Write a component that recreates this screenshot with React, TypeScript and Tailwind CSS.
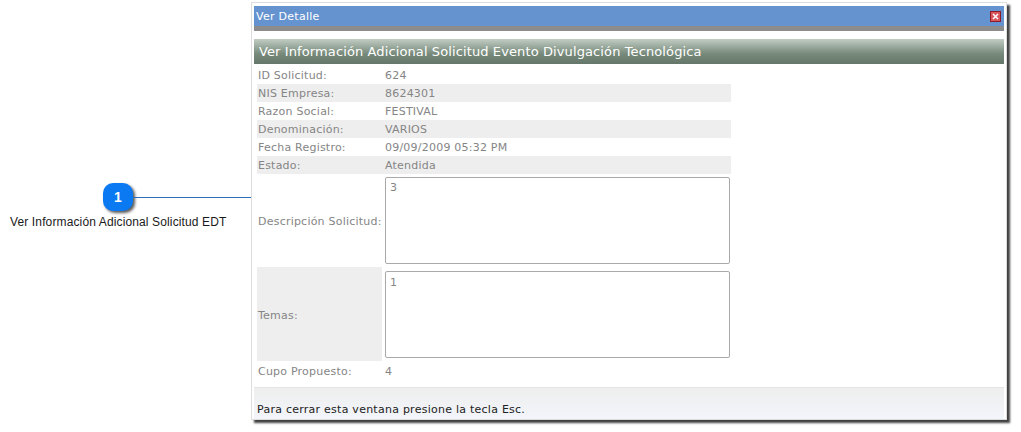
import React from 'react';

const rows = [
  { label: 'ID Solicitud:', value: '624' },
  { label: 'NIS Empresa:', value: '8624301' },
  { label: 'Razon Social:', value: 'FESTIVAL' },
  { label: 'Denominación:', value: 'VARIOS' },
  { label: 'Fecha Registro:', value: '09/09/2009 05:32 PM' },
  { label: 'Estado:', value: 'Atendida' },
];

const dejavu = "font-['DejaVu_Sans',sans-serif]";

const InfoRow = ({ label, value, shaded }: { label: string; value: string; shaded: boolean }) => (
  <div className={`flex h-[18px] items-center pt-[2px] ${shaded ? 'bg-[#eeeeee]' : ''}`}>
    <div className="w-[128px] pl-[1px]">{label}</div>
    <div>{value}</div>
  </div>
);

const App: React.FC = () => {
  return (
    <div className="flex h-[432px] w-[1021px] overflow-hidden bg-white">
      {/* Callout */}
      <div className="w-[251px] flex-shrink-0 pt-[183px]">
        <div className="flex items-center pl-[103px]">
          <div className="flex h-[28px] w-[30px] flex-shrink-0 items-center justify-center rounded-[10px] bg-[#0b79f2] font-['Liberation_Sans',sans-serif] text-[14px] font-bold text-white shadow-[2px_2px_3px_rgba(0,0,0,0.65)]">
            1
          </div>
          <div className="h-px flex-grow bg-[#2c6fb8]" />
        </div>
        <p className="mt-[4px] pl-[10px] font-['Liberation_Sans',sans-serif] text-[12px] leading-[14px] tracking-[0.13px] text-[#1a1a1a]">
          Ver Información Adicional Solicitud EDT
        </p>
      </div>

      {/* Ventana */}
      <div className={`mt-[2px] flex h-[418px] w-[756px] flex-shrink-0 flex-col border border-[#dddddd] bg-white px-[2px] pt-[3px] text-[11px] tracking-[0.22px] shadow-[3px_3px_2px_rgba(0,0,0,0.75)] ${dejavu}`}>
        <div className="flex h-[20px] flex-shrink-0 items-center justify-between bg-[#6593cf] pl-[2px] pr-[3px] pt-[1px] text-white">
          <span className="pt-[1px] tracking-[0.27px]">Ver Detalle</span>
          <span className="flex h-[11px] w-[11px] items-center justify-center border border-[#8c1c28] bg-[#d9555c]">
            <svg width="7" height="7" viewBox="0 0 7 7">
              <path d="M1 1l5 5M6 1L1 6" stroke="#ffffff" strokeWidth="1.5" />
            </svg>
          </span>
        </div>
        <div className="h-[5px] flex-shrink-0 bg-[#8c8c8c]" />
        <div className="h-[8px] flex-shrink-0" />
        <div className="flex h-[25px] flex-shrink-0 items-center bg-gradient-to-b from-[#c2cdc4] via-[#76897a] via-60% to-[#64776a] pl-[5px] text-[13px] tracking-[0.11px] text-white">
          Ver Información Adicional Solicitud Evento Divulgación Tecnológica
        </div>

        <div className="flex flex-grow flex-col pl-[3px] pt-[2px] text-[#858585]">
          <div className="w-[474px]">
            {rows.map((row, i) => (
              <InfoRow key={row.label} label={row.label} value={row.value} shaded={i % 2 === 1} />
            ))}
            <div className="flex h-[93px] items-start">
              <div className="w-[128px] self-center pl-[1px] pt-[3px]">Descripción Solicitud:</div>
              <div className="mt-[3px] h-[87px] w-[345px] rounded-[2px] border border-[#a9a9a9] px-[4px] py-[2px]">3</div>
            </div>
            <div className="flex h-[94px] items-start">
              <div className="flex h-full w-[125px] items-center bg-[#eeeeee] pl-[1px] pt-[4px]">Temas:</div>
              <div className="ml-[3px] mt-[4px] h-[87px] w-[345px] rounded-[2px] border border-[#a9a9a9] px-[4px] py-[3px]">1</div>
            </div>
            <div className="flex h-[19px] items-center pt-[3px]">
              <div className="w-[128px] pl-[1px]">Cupo Propuesto:</div>
              <div>4</div>
            </div>
          </div>
        </div>

        <div className="flex h-[32px] flex-shrink-0 items-end border-t border-[#e2e5e2] bg-gradient-to-b from-[#eeeeee] to-[#f2f5fa] pb-[1px] pl-[3px] tracking-[0.25px] text-[#222222]">
          Para cerrar esta ventana presione la tecla Esc.
        </div>
      </div>
    </div>
  );
};

export default App;
